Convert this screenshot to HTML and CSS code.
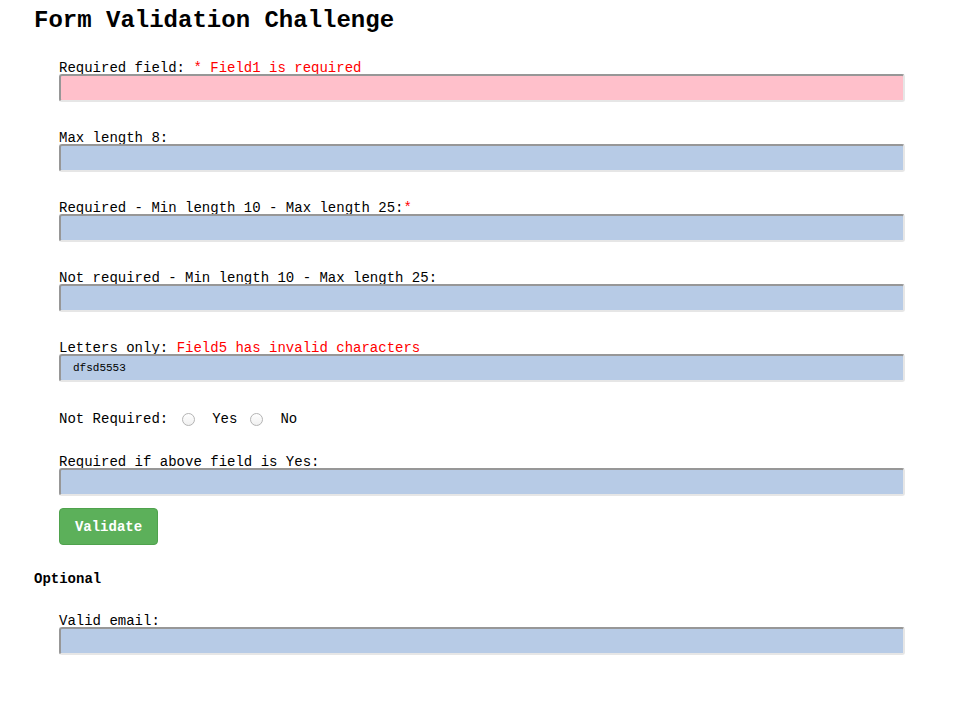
FILE: index.html
```html
<!DOCTYPE html>
<html>
<head>
<meta charset="utf-8">
<link rel="stylesheet" href="styles.css">
</head>
<body>
<h1 class="title">Form Validation Challenge</h1>
<form class="form">
  <div class="group">
    <label class="label">Required field: <span class="err">* Field1 is required</span></label>
    <input class="field field-error" type="text">
  </div>
  <div class="group">
    <label class="label">Max length 8:</label>
    <input class="field" type="text">
  </div>
  <div class="group">
    <label class="label">Required - Min length 10 - Max length 25:<span class="err">*</span></label>
    <input class="field" type="text">
  </div>
  <div class="group">
    <label class="label">Not required - Min length 10 - Max length 25:</label>
    <input class="field" type="text">
  </div>
  <div class="group">
    <label class="label">Letters only: <span class="err">Field5 has invalid characters</span></label>
    <input class="field" type="text" value="dfsd5553">
  </div>
  <div class="radio-row">
    <span class="radio-label">Not Required:</span>
    <input class="radio" type="radio" name="nr"><span class="opt">Yes</span>
    <input class="radio" type="radio" name="nr"><span class="opt">No</span>
  </div>
  <div class="group">
    <label class="label">Required if above field is Yes:</label>
    <input class="field" type="text">
  </div>
  <button class="btn" type="button">Validate</button>
</form>
<div class="section">Optional</div>
<div class="form">
  <div class="group">
    <label class="label">Valid email:</label>
    <input class="field" type="text">
  </div>
</div>
</body>
</html>
```

FILE: styles.css
```css
html, body {
  margin: 0;
  padding: 0;
  background: #ffffff;
}
body {
  font-family: "Liberation Mono", "Courier New", monospace;
  color: #000;
  padding: 0 0 0 34px;
}
.title {
  font-size: 24px;
  font-weight: bold;
  margin: 0;
  padding-top: 8px;
  line-height: 26px;
  height: 25px;
}
.form {
  display: flex;
  flex-direction: column;
  align-items: flex-start;
  padding-left: 25px;
  width: 846px;
}
.form:first-of-type {
  padding-top: 25px;
}
.group {
  display: flex;
  flex-direction: column;
  width: 846px;
  margin-bottom: 26px;
}
.label {
  font-size: 14px;
  line-height: 16px;
  height: 14px;
  padding-top: 2px;
}
.err {
  color: #ff0000;
}
.field {
  box-sizing: border-box;
  width: 846px;
  height: 28px;
  margin: 0;
  background: #b7cbe6;
  border-style: solid;
  border-width: 2px;
  border-color: #979797 #e6e6e6 #e6e6e6 #979797;
  border-radius: 3px;
  padding: 0 12px;
  font-family: "Liberation Mono", "Courier New", monospace;
  font-size: 11px;
  color: #000;
  outline: none;
}
.field-error {
  background: #ffc0cb;
}
.radio-row {
  display: flex;
  align-items: center;
  height: 20px;
  font-size: 14px;
  margin-bottom: 23px;
  padding-top: 1px;
}
.radio-label {
  margin-right: 14px;
}
.radio {
  appearance: none;
  -webkit-appearance: none;
  box-sizing: border-box;
  width: 13px;
  height: 13px;
  margin: 0 17px 0 0;
  border: 1px solid #b4b4b4;
  border-radius: 50%;
  background: linear-gradient(#ffffff, #f0f0f0);
}
.opt {
  margin-right: 13px;
}
.btn {
  margin-top: -14px;
  width: 99px;
  height: 37px;
  background: #5cb05a;
  color: #fff;
  border: 1px solid #4fa24d;
  border-radius: 4px;
  font-family: "Liberation Mono", "Courier New", monospace;
  font-size: 14px;
  font-weight: bold;
  padding: 0;
}
.section {
  font-size: 14px;
  font-weight: bold;
  margin-top: 26px;
  line-height: 16px;
  margin-bottom: 24px;
}
```
